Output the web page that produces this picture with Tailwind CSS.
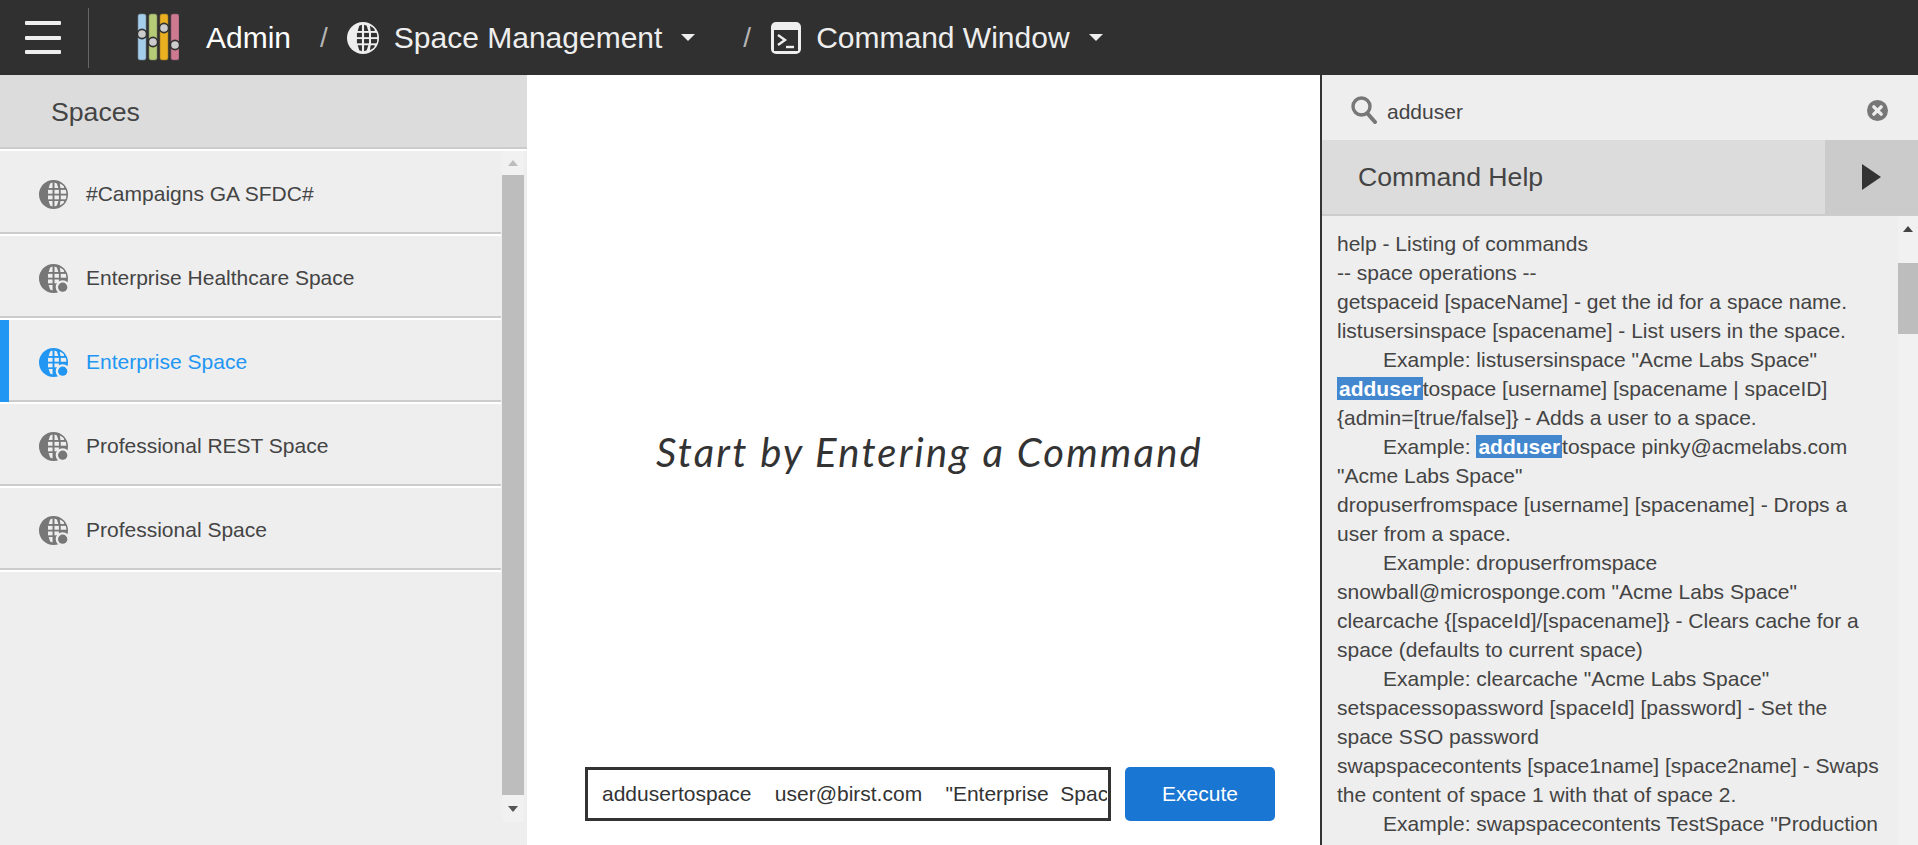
<!DOCTYPE html>
<html lang="en">
<head>
<meta charset="utf-8">
<title>Command Window</title>
<script src="https://cdn.jsdelivr.net/npm/@tailwindcss/browser@4"></script>
</head>
<body class="m-0 overflow-hidden bg-white">
<svg width="0" height="0" class="absolute">
  <defs>
    <clipPath id="gc"><circle cx="15" cy="15" r="13.6"/></clipPath>
    <symbol id="globe" viewBox="0 0 30 30">
      <circle cx="15" cy="15" r="15" fill="currentColor"/>
      <g fill="var(--g)" clip-path="url(#gc)">
        <path d="M11.5 3.5L14 2.5V8.4H10ZM16 2.5L18.5 3.5L20 8.4H16ZM21.5 3.5L26 6V8.4H22.2Z"/>
        <rect x="9.3" y="10.2" width="4.7" height="4"/><rect x="16" y="10.2" width="4.6" height="4"/><rect x="22.5" y="10.2" width="6" height="4"/>
        <rect x="9.3" y="16" width="4.7" height="4"/><rect x="16" y="16" width="4.6" height="4"/><rect x="22.5" y="16" width="6" height="4"/>
        <path d="M10 21.8H14V27.5L11.5 26.5ZM16 21.8H20L18.5 26.5L16 27.5ZM22.2 21.8H26V24L21.5 26.5Z"/>
      </g>
    </symbol>
    <symbol id="globedot" viewBox="0 0 30 30">
      <circle cx="15" cy="15" r="15" fill="currentColor"/>
      <g fill="#eeeeee" clip-path="url(#gc)">
        <path d="M11.5 3.5L14 2.5V8.4H10ZM16 2.5L18.5 3.5L20 8.4H16ZM21.5 3.5L26 6V8.4H22.2Z"/>
        <rect x="9.3" y="10.2" width="4.7" height="4"/><rect x="16" y="10.2" width="4.6" height="4"/><rect x="22.5" y="10.2" width="6" height="4"/>
        <rect x="9.3" y="16" width="4.7" height="4"/><rect x="16" y="16" width="4.6" height="4"/>
        <path d="M10 21.8H14V27.5L11.5 26.5Z"/>
      </g>
      <circle cx="24.5" cy="24" r="7.2" fill="#eeeeee"/>
      <circle cx="24.5" cy="24" r="4.8" fill="currentColor"/>
    </symbol>
  </defs>
</svg>
<div class="flex flex-col w-[1918px] h-[845px] font-['Liberation_Sans',Arial,sans-serif]">
  <!-- Top bar -->
  <header class="flex items-center h-[75px] shrink-0 bg-[#303030] text-[30px] text-[#eeeeee]">
    <div class="flex flex-col gap-[10.5px] ml-[25px] w-[36px]">
      <span class="block h-[4px] rounded-[1px] bg-[#eeeeee]"></span>
      <span class="block h-[4px] rounded-[1px] bg-[#eeeeee]"></span>
      <span class="block h-[4px] rounded-[1px] bg-[#eeeeee]"></span>
    </div>
    <div class="ml-[27px] w-px h-[60px] bg-[#666666]"></div>
    <svg class="ml-[48px] mb-[1px]" width="42" height="48" viewBox="0 0 42 48">
      <rect x="1" y="1" width="8" height="46" rx="2" fill="#a5cdec" stroke="#6d7f8c" stroke-width=".6"/>
      <rect x="12" y="1" width="8" height="46" rx="2" fill="#b5cb76" stroke="#75805a" stroke-width=".6"/>
      <rect x="23" y="1" width="8" height="46" rx="2" fill="#ebb020" stroke="#94732a" stroke-width=".6"/>
      <rect x="34" y="1" width="8" height="46" rx="2" fill="#cd7a90" stroke="#82566a" stroke-width=".6"/>
      <circle cx="5" cy="21" r="4.6" fill="#cccccc" stroke="#303030" stroke-width="1.6"/>
      <circle cx="16" cy="29" r="4.6" fill="#cccccc" stroke="#303030" stroke-width="1.6"/>
      <circle cx="27" cy="15" r="4.6" fill="#cccccc" stroke="#303030" stroke-width="1.6"/>
      <circle cx="38" cy="32" r="4.6" fill="#cccccc" stroke="#303030" stroke-width="1.6"/>
    </svg>
    <span class="ml-[27px] text-white">Admin</span>
    <span class="ml-[29px] text-[#b5b5b5] text-[28px]">/</span>
    <svg class="ml-[19px] text-[#eeeeee] [--g:#303030]" width="32" height="32"><use href="#globe"/></svg>
    <span class="ml-[15px]">Space Management</span>
    <span class="ml-[19px] w-0 h-0 border-x-[7px] border-x-transparent border-t-[7px] border-t-[#eeeeee]"></span>
    <span class="ml-[48px] text-[#b5b5b5] text-[28px]">/</span>
    <svg class="ml-[20px]" width="30" height="32" viewBox="0 0 30 32">
      <rect x="0" y="0" width="30" height="32" rx="5" fill="#eeeeee"/>
      <rect x="3" y="8" width="24" height="21" fill="#303030"/>
      <path d="M7 13L14 18L7 23" fill="none" stroke="#eeeeee" stroke-width="2.4"/>
      <path d="M15 25H23" stroke="#eeeeee" stroke-width="2.4"/>
    </svg>
    <span class="ml-[15px]">Command Window</span>
    <span class="ml-[19px] w-0 h-0 border-x-[7px] border-x-transparent border-t-[7px] border-t-[#eeeeee]"></span>
  </header>

  <main class="flex flex-1 min-h-0">
    <!-- Spaces panel -->
    <aside class="flex flex-col w-[527px] shrink-0 bg-[#eeeeee] shadow-[2px_0_3px_rgba(0,0,0,0.08)]">
      <div class="flex items-center h-[74px] shrink-0 pl-[51px] pt-[2px] bg-[#dcdcdc] border-b-2 border-[#cccccc] text-[26.67px] text-[#444444]">Spaces</div>
      <div class="flex flex-1 min-h-0 bg-[#eeeeee] border-t-2 border-white">
        <ul class="flex flex-col w-[501px] shrink-0 text-[21px] text-[#444444]">
          <li class="flex items-center h-[83px] mb-[2px] pt-[5px] shrink-0 pl-[39px] border-b-2 border-[#cccccc] shadow-[0_2px_0_#ffffff]">
            <svg class="text-[#777777] [--g:#eeeeee]" width="29" height="29"><use href="#globe"/></svg>
            <span class="ml-[18px]">#Campaigns GA SFDC#</span>
          </li>
          <li class="flex items-center h-[82px] mb-[2px] pt-[4px] shrink-0 pl-[39px] border-b-2 border-[#cccccc] shadow-[0_2px_0_#ffffff]">
            <svg class="text-[#777777]" width="29" height="29"><use href="#globedot"/></svg>
            <span class="ml-[18px]">Enterprise Healthcare Space</span>
          </li>
          <li class="relative flex items-center h-[82px] mb-[2px] pt-[4px] shrink-0 pl-[39px] border-b-2 border-[#cccccc] shadow-[0_2px_0_#ffffff] text-[#2196f3]">
            <span class="absolute left-0 top-0 bottom-[-2px] w-[9px] bg-[#2196f3]"></span>
            <svg class="text-[#2196f3]" width="29" height="29"><use href="#globedot"/></svg>
            <span class="ml-[18px]">Enterprise Space</span>
          </li>
          <li class="flex items-center h-[82px] mb-[2px] pt-[4px] shrink-0 pl-[39px] border-b-2 border-[#cccccc] shadow-[0_2px_0_#ffffff]">
            <svg class="text-[#777777]" width="29" height="29"><use href="#globedot"/></svg>
            <span class="ml-[18px]">Professional REST Space</span>
          </li>
          <li class="flex items-center h-[82px] mb-[2px] pt-[4px] shrink-0 pl-[39px] border-b-2 border-[#cccccc] shadow-[0_2px_0_#ffffff]">
            <svg class="text-[#777777]" width="29" height="29"><use href="#globedot"/></svg>
            <span class="ml-[18px]">Professional Space</span>
          </li>
        </ul>
        <div class="flex flex-col items-center w-[22px] ml-px mb-[23px] pb-[10px] bg-[#f1f1f1]">
          <span class="mt-[9px] w-0 h-0 border-x-[5px] border-x-transparent border-b-[6px] border-b-[#bdbdbd]"></span>
          <span class="mt-[9px] flex-1 w-full bg-[#bdbdbd]"></span>
          <span class="mt-[11px] w-0 h-0 border-x-[5px] border-x-transparent border-t-[6px] border-t-[#555555]"></span>
        </div>
        <div class="w-[3px]"></div>
      </div>
    </aside>

    <!-- Center -->
    <section class="flex flex-col flex-1 min-w-0 bg-white">
      <div class="flex flex-1 items-center justify-center pt-[62px] pl-[12px] font-['Lato',sans-serif] italic text-[40px] tracking-[2.2px] text-[#333333]">Start by Entering a Command</div>
      <div class="flex items-center h-[54px] mb-[24px] ml-[58px] shrink-0">
        <input class="w-[526px] h-[54px] pl-[14px] pr-[1px] border-[3px] border-[#333333] bg-white text-[21px] text-[#333333] outline-none font-['Liberation_Sans',Arial,sans-serif]" type="text" value='addusertospace    user@birst.com    "Enterprise  Space"'>
        <button class="ml-[14px] w-[150px] h-[54px] rounded-[5px] bg-[#1976d2] text-white text-[21px]">Execute</button>
      </div>
    </section>

    <!-- Help panel -->
    <aside class="flex flex-col w-[598px] shrink-0 bg-[#eeeeee] border-l-2 border-[#333333] text-[#444444]">
      <div class="flex items-center h-[65px] shrink-0 pl-[29px] pr-[30px] pt-[5px]">
        <svg width="26" height="28" viewBox="0 0 26 28">
          <circle cx="10.5" cy="10.5" r="8.5" fill="none" stroke="#777777" stroke-width="3.4"/>
          <path d="M16.5 17.5L24 26" stroke="#777777" stroke-width="4" stroke-linecap="round"/>
        </svg>
        <span class="ml-[10px] flex-1 text-[21px] pt-[3px]">adduser</span>
        <svg width="21" height="21" viewBox="0 0 20 20">
          <circle cx="10" cy="10" r="10" fill="#777777"/>
          <path d="M6.5 6.5L13.5 13.5M13.5 6.5L6.5 13.5" stroke="#eeeeee" stroke-width="3.2" stroke-linecap="round"/>
        </svg>
      </div>
      <div class="flex h-[76px] shrink-0 bg-[#dcdcdc] border-b-2 border-[#cccccc]">
        <div class="flex flex-1 items-center pl-[36px] text-[26.67px]">Command Help</div>
        <div class="flex items-center w-[93px] pl-[37px] bg-[#cbcbcb]">
          <span class="w-0 h-0 border-y-[13px] border-y-transparent border-l-[19px] border-l-[#333333]"></span>
        </div>
      </div>
      <div class="flex flex-1 min-h-0">
        <div class="w-[547px] ml-[15px] pt-[13px] overflow-hidden text-[21px] leading-[29px] text-[#444444]">
          <p>help - Listing of commands</p>
          <p>-- space operations --</p>
          <p>getspaceid [spaceName] - get the id for a space name.</p>
          <p>listusersinspace [spacename] - List users in the space.</p>
          <p><span class="inline-block w-[46px]"></span>Example: listusersinspace "Acme Labs Space"</p>
          <p><b class="px-[2px] bg-[#4387cf] text-white font-bold">adduser</b>tospace [username] [spacename | spaceID] {admin=[true/false]} - Adds a user to a space.</p>
          <p><span class="inline-block w-[46px]"></span>Example: <b class="px-[2px] bg-[#4387cf] text-white font-bold">adduser</b>tospace pinky@acmelabs.com "Acme Labs Space"</p>
          <p>dropuserfromspace [username] [spacename] - Drops a user from a space.</p>
          <p><span class="inline-block w-[46px]"></span>Example: dropuserfromspace snowball@microsponge.com "Acme Labs Space"</p>
          <p>clearcache {[spaceId]/[spacename]} - Clears cache for a space (defaults to current space)</p>
          <p><span class="inline-block w-[46px]"></span>Example: clearcache "Acme Labs Space"</p>
          <p>setspacessopassword [spaceId] [password] - Set the space SSO password</p>
          <p>swapspacecontents [space1name] [space2name] - Swaps the content of space 1 with that of space 2.</p>
          <p><span class="inline-block w-[46px]"></span>Example: swapspacecontents TestSpace "Production</p>
        </div>
        <div class="flex flex-col items-center w-[20px] ml-auto bg-[#f1f1f1]">
          <span class="mt-[10px] w-0 h-0 border-x-[5px] border-x-transparent border-b-[6px] border-b-[#444444]"></span>
          <span class="mt-[31px] w-full h-[71px] bg-[#bdbdbd]"></span>
        </div>
      </div>
    </aside>
  </main>
</div>
</body>
</html>
